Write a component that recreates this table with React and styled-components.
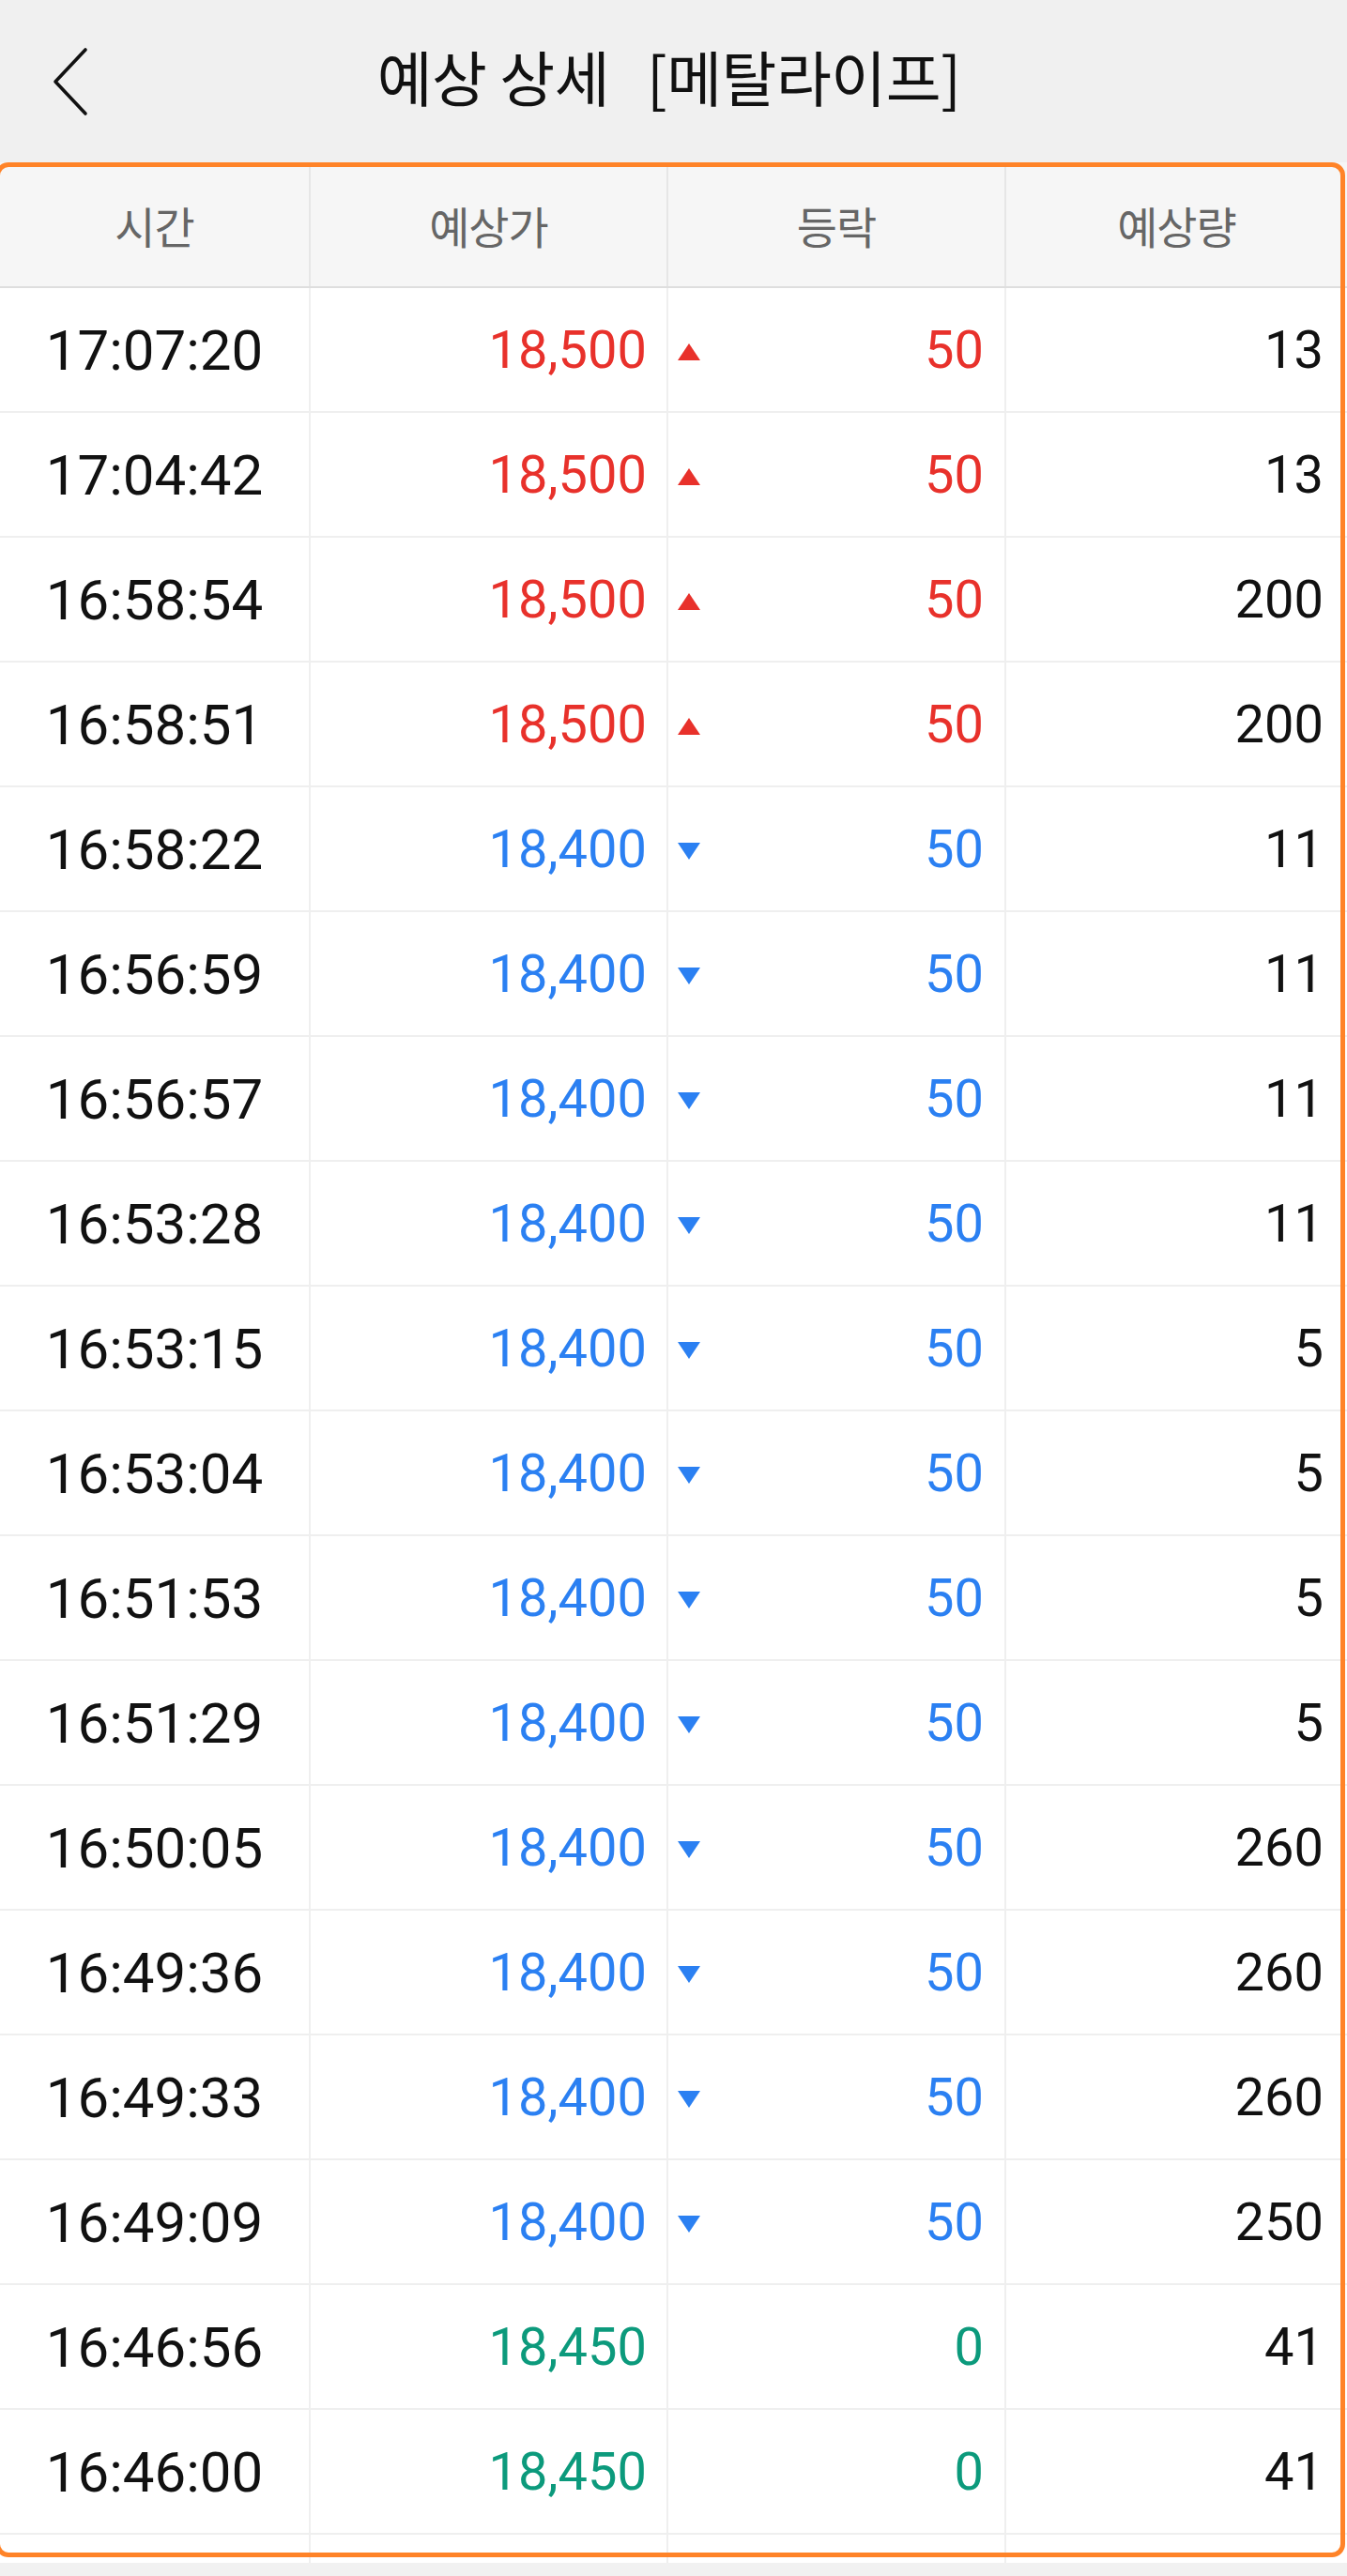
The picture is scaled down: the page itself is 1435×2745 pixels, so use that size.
import React from "react";
import styled, { createGlobalStyle } from "styled-components";

const GlobalStyle = createGlobalStyle`
	html, body {
		margin: 0;
		padding: 0;
		background: #f1f1f1;
	}
	body {
		font-family: Roboto, "Noto Sans CJK KR", sans-serif;
		min-height: 2745px;
	}
`;

const COLORS = {
	up: "#e8312b",
	down: "#2b80f2",
	flat: "#0c9a7c",
};

const rows = [
	["17:07:20", "18,500", "up", "50", "13"],
	["17:04:42", "18,500", "up", "50", "13"],
	["16:58:54", "18,500", "up", "50", "200"],
	["16:58:51", "18,500", "up", "50", "200"],
	["16:58:22", "18,400", "down", "50", "11"],
	["16:56:59", "18,400", "down", "50", "11"],
	["16:56:57", "18,400", "down", "50", "11"],
	["16:53:28", "18,400", "down", "50", "11"],
	["16:53:15", "18,400", "down", "50", "5"],
	["16:53:04", "18,400", "down", "50", "5"],
	["16:51:53", "18,400", "down", "50", "5"],
	["16:51:29", "18,400", "down", "50", "5"],
	["16:50:05", "18,400", "down", "50", "260"],
	["16:49:36", "18,400", "down", "50", "260"],
	["16:49:33", "18,400", "down", "50", "260"],
	["16:49:09", "18,400", "down", "50", "250"],
	["16:46:56", "18,450", "flat", "0", "41"],
	["16:46:00", "18,450", "flat", "0", "41"],
];

function Arrow({ dir }) {
	if (dir === "flat") return <span />;
	const points = dir === "up" ? "12,0 24,18 0,18" : "0,0 24,0 12,18";
	return (
		<svg width="24" height="18" viewBox="0 0 24 18">
			<polygon points={points} fill={COLORS[dir]} />
		</svg>
	);
}

export default function App() {
	return (
		<>
			<GlobalStyle />
			<Header>
				<Back>
					<svg width="40" height="76" viewBox="0 0 40 76">
						<polyline
							points="36,4 4,38 36,72"
							fill="none"
							stroke="#111"
							strokeWidth="3.6"
							strokeLinecap="round"
							strokeLinejoin="round"
						/>
					</svg>
				</Back>
				<Title>
					예상 상세<Gap />[메탈라이프]
				</Title>
				<span />
			</Header>
			<Board>
				<HeadRow>
					<HeadCell>시간</HeadCell>
					<HeadCell>예상가</HeadCell>
					<HeadCell>등락</HeadCell>
					<HeadCell>예상량</HeadCell>
				</HeadRow>
				{rows.map(([time, price, dir, diff, qty]) => (
					<Row key={time}>
						<TimeCell>{time}</TimeCell>
						<NumCell $color={COLORS[dir]}>{price}</NumCell>
						<DiffCell $color={COLORS[dir]}>
							<Arrow dir={dir} />
							<span>{diff}</span>
						</DiffCell>
						<QtyCell>{qty}</QtyCell>
					</Row>
				))}
				<Row>
					<TimeCell />
					<NumCell />
					<DiffCell />
					<QtyCell />
				</Row>
				<Frame />
			</Board>
		</>
	);
}

const Header = styled.header`
	height: 173px;
	background: #f0f0f0;
	display: grid;
	grid-template-columns: 1fr auto 1fr;
	align-items: center;
`;

const Back = styled.div`
	padding-left: 55px;
	display: flex;
	align-items: center;
`;

const Title = styled.h1`
	margin: 0 0 14px -10px;
	font-family: "Noto Sans CJK KR", sans-serif;
	font-size: 64px;
	font-weight: 400;
	color: #111;
	white-space: nowrap;
	display: flex;
	align-items: center;
	letter-spacing: -0.5px;
`;

const Gap = styled.span`
	display: inline-block;
	width: 40px;
`;

const Board = styled.section`
	position: relative;
	height: 2558px;
	overflow: hidden;
	background: #fff;
`;

const Grid = styled.div`
	display: grid;
	grid-template-columns: 331px 381px 360px 1fr;
`;

const HeadRow = styled(Grid)`
	height: 132px;
	background: #f6f6f6;
	border-bottom: 2px solid #dedede;
`;

const HeadCell = styled.div`
	display: flex;
	align-items: center;
	justify-content: center;
	font-family: "Noto Sans CJK KR", sans-serif;
	font-size: 47px;
	color: #666;
	letter-spacing: -1px;
	border-right: 2px solid #e6e6e6;

	&:last-child {
		border-right: 0;
	}
`;

const Row = styled(Grid)`
	height: 131px;
	border-bottom: 2px solid #efefef;
`;

const Cell = styled.div`
	display: flex;
	align-items: center;
	border-right: 2px solid #efefef;
	font-family: Roboto, sans-serif;
	font-size: 56px;
	color: ${(p) => p.$color || "#111"};

	&:last-child {
		border-right: 0;
	}
`;

const TimeCell = styled(Cell)`
	justify-content: center;
	font-size: 60px;
	padding-top: 2px;
`;

const NumCell = styled(Cell)`
	justify-content: flex-end;
	padding-right: 21px;
`;

const QtyCell = styled(NumCell)`
	padding-right: 25px;
`;

const DiffCell = styled(Cell)`
	justify-content: space-between;
	padding: 0 22px 0 10px;

	svg {
		margin-top: 4px;
	}
`;

const Frame = styled.div`
	position: absolute;
	top: 0;
	left: -5px;
	right: 2px;
	bottom: 6px;
	border: 5px solid #ff8328;
	border-radius: 14px;
	pointer-events: none;
`;
